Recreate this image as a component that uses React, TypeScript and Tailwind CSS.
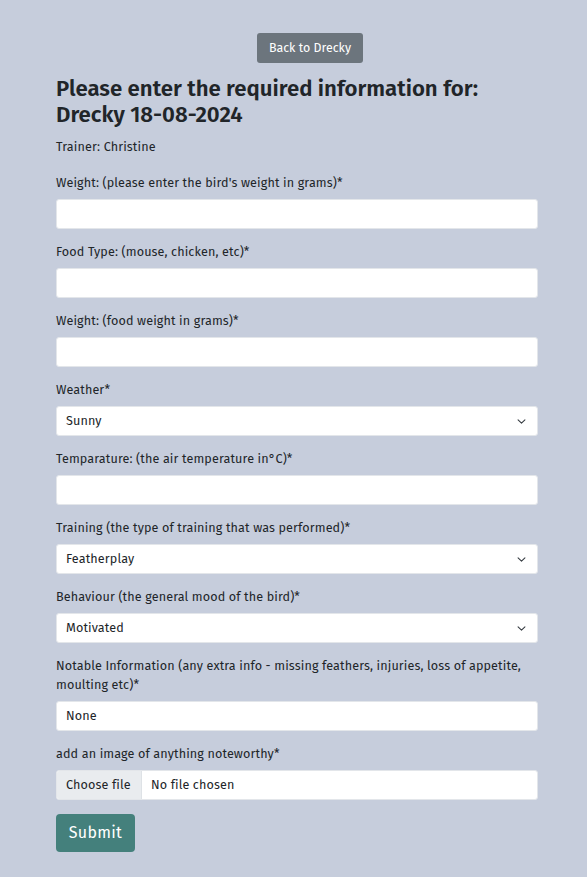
import React from "react";

const Chevron = () => (
  <svg width="11" height="11" viewBox="0 0 16 16" className="shrink-0">
    <path d="M3 5.5l5 5 5-5" fill="none" stroke="#343a40" strokeWidth="1.5" strokeLinecap="round" strokeLinejoin="round" />
  </svg>
);

const Label = ({ children }: { children: React.ReactNode }) => (
  <label className="block text-[12.6px] tracking-[0.12px] leading-[19px] mb-[7px] text-[#212529]">{children}</label>
);

const TextInput = ({ value = "" }: { value?: string }) => (
  <div className="h-[30px] w-full bg-white rounded-[3px] border border-[#e3e6ea] flex items-center px-[9px] text-[12.6px] tracking-[0.12px] text-[#212529]">
    {value}
  </div>
);

const Select = ({ value }: { value: string }) => (
  <div className="h-[30px] w-full bg-white rounded-[3px] border border-[#e3e6ea] flex items-center justify-between pl-[9px] pr-[10px] text-[12.6px] tracking-[0.12px] text-[#212529]">
    <span>{value}</span>
    <Chevron />
  </div>
);

const Group = ({ label, children }: { label: React.ReactNode; children: React.ReactNode }) => (
  <div className="mb-[13px]">
    <Label>{label}</Label>
    {children}
  </div>
);

export default function App() {
  return (
    <div
      className="min-h-[877px] bg-[#c6cddc] text-[#212529] pt-[33px]"
      style={{ fontFamily: '"Fira Sans", "Noto Sans", sans-serif' }}
    >
      <div className="flex justify-center pl-[33px]">
        <button className="h-[30px] w-[106px] rounded-[3px] bg-[#6c757d] text-white text-[12.4px]">Back to Drecky</button>
      </div>
      <div className="ml-[56px] w-[482px] mt-[13px]">
        <h3 className="text-[22.2px] leading-[26px] font-semibold mb-[9px]">
          Please enter the required information for:
          <br />
          Drecky 18-08-2024
        </h3>
        <p className="text-[12.6px] tracking-[0.12px] leading-[19px] mb-[17px]">Trainer: Christine</p>
        <Group label="Weight: (please enter the bird's weight in grams)*">
          <TextInput />
        </Group>
        <Group label="Food Type: (mouse, chicken, etc)*">
          <TextInput />
        </Group>
        <Group label="Weight: (food weight in grams)*">
          <TextInput />
        </Group>
        <Group label="Weather*">
          <Select value="Sunny" />
        </Group>
        <Group label="Temparature: (the air temperature in°C)*">
          <TextInput />
        </Group>
        <Group label="Training (the type of training that was performed)*">
          <Select value="Featherplay" />
        </Group>
        <Group label="Behaviour (the general mood of the bird)*">
          <Select value="Motivated" />
        </Group>
        <Group label="Notable Information (any extra info - missing feathers, injuries, loss of appetite, moulting etc)*">
          <TextInput value="None" />
        </Group>
        <Group label="add an image of anything noteworthy*">
          <div className="h-[30px] w-full bg-white rounded-[3px] border border-[#e3e6ea] flex items-stretch text-[12.6px] tracking-[0.12px] overflow-hidden">
            <div className="bg-[#e9ecef] border-r border-[#dee2e6] flex items-center px-[9px] w-[85px]">Choose file</div>
            <div className="flex items-center pl-[9px]">No file chosen</div>
          </div>
        </Group>
        <button className="mt-px h-[38px] w-[79px] rounded-[4px] bg-[#44807c] text-white text-[16px] tracking-[0.3px]">Submit</button>
      </div>
    </div>
  );
}
